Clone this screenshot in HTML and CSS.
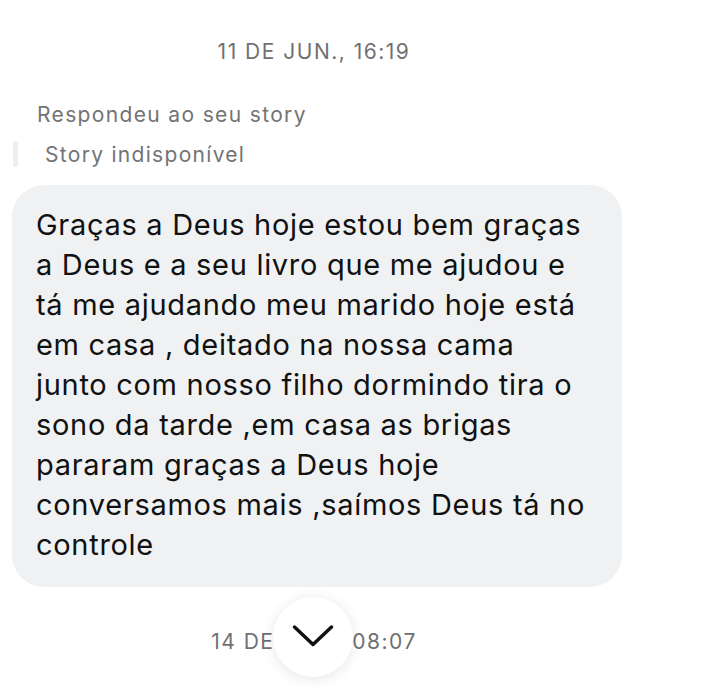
FILE: index.html
```html
<!DOCTYPE html>
<html lang="pt">
<head>
<meta charset="utf-8">
<link rel="stylesheet" href="styles.css">
</head>
<body>
<div class="chat">
  <div class="stamp">11 DE JUN., 16:19</div>
  <div class="reply-label">Respondeu ao seu story</div>
  <div class="story">
    <span class="story-bar"></span>
    <span class="story-text">Story indisponível</span>
  </div>
  <div class="bubble">Graças a Deus hoje estou bem graças<br>a Deus e a seu livro que me ajudou e<br>tá me ajudando meu marido hoje está<br>em casa , deitado na nossa cama<br>junto com nosso filho dormindo tira o<br>sono da tarde ,em casa as brigas<br>pararam graças a Deus hoje<br>conversamos mais ,saímos Deus tá no<br>controle</div>
  <div class="stamp stamp-bottom">14 DE JUN., 08:07
    <button class="scroll-down" aria-label="Descer">
      <svg width="42" height="24" viewBox="0 0 42 24"><path d="M2.5 3 L21 20.5 L39.5 3" fill="none" stroke="#111" stroke-width="3.5" stroke-linecap="round" stroke-linejoin="round"/></svg>
    </button>
  </div>
</div>
</body>
</html>
```
FILE: styles.css
```css
html, body {
  margin: 0;
  padding: 0;
  background: #ffffff;
}
body {
  font-family: Inter, "Liberation Sans", Arial, sans-serif;
  width: 728px;
  height: 686px;
  overflow: hidden;
}
.chat {
  display: flex;
  flex-direction: column;
  padding: 37px 0 0 0;
}
.stamp {
  width: 628px;
  text-align: center;
  font-size: 21px;
  letter-spacing: 1.5px;
  line-height: 30px;
  color: #707072;
}
.reply-label {
  margin-top: 33px;
  padding-left: 37px;
  font-size: 21px;
  letter-spacing: 1.35px;
  line-height: 30px;
  color: #737375;
}
.story {
  display: flex;
  align-items: center;
  margin-top: 10px;
  height: 28px;
}
.story-bar {
  width: 5px;
  height: 26px;
  margin-left: 13px;
  border-radius: 3px;
  background: #eceef0;
}
.story-text {
  margin-left: 27px;
  font-size: 21px;
  letter-spacing: 1.3px;
  color: #737375;
}
.bubble {
  margin: 17px 0 0 12px;
  width: 610px;
  box-sizing: border-box;
  padding: 20px 10px 22px 24px;
  background: #eff1f3;
  border-radius: 32px;
  font-size: 29px;
  letter-spacing: 0.7px;
  line-height: 40px;
  color: #111111;
  white-space: nowrap;
}
.stamp-bottom {
  position: relative;
  margin-top: 40px;
}
.scroll-down {
  position: absolute;
  left: 273px;
  top: -30px;
  width: 80px;
  height: 80px;
  border-radius: 50%;
  border: none;
  background: #ffffff;
  box-shadow: 0 2px 14px rgba(0,0,0,0.10);
  display: flex;
  align-items: center;
  justify-content: center;
  padding: 0 0 2px 0;
}
```
